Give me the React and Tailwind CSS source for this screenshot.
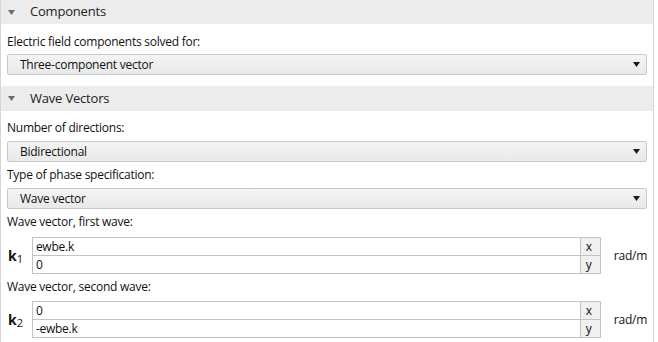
import React from 'react'

function Caret() {
  return (
    <svg width="7" height="5" viewBox="0 0 7 5" className="shrink-0">
      <path d="M0 0 H7 L3.5 5 Z" fill="#1a1a1a" />
    </svg>
  )
}

function Header({ title, tall }) {
  return (
    <div className={`flex items-center bg-[#ececec] ${tall ? 'h-[25px]' : 'h-[24px]'}`}>
      <svg width="7" height="5" viewBox="0 0 7 5" className="ml-[7px] mr-[15px]">
        <path d="M0 0 H7 L3.5 5 Z" fill="#6b6b6b" />
      </svg>
      <span className="text-[13px] text-[#222] tracking-[-0.2px]">{title}</span>
    </div>
  )
}

function Label({ children }) {
  return <div className="h-[18px] leading-[18px] text-[12px] text-[#111] tracking-[-0.25px]">{children}</div>
}

function Select({ value }) {
  return (
    <div className="flex items-center justify-between h-[21px] rounded-[2px] border border-[#c9c9c9] bg-gradient-to-b from-[#f4f4f4] to-[#e9e9e9] pl-[12px] pr-[6px]">
      <span className="text-[12px] text-[#111] tracking-[-0.25px]">{value}</span>
      <Caret />
    </div>
  )
}

function VectorField({ sub, values }) {
  return (
    <div className="flex items-center">
      <div className="w-[25px] pl-[1px] text-[#111]">
        <span className="font-bold text-[14px]">k</span>
        <span className="text-[11px] align-[-2px]">{sub}</span>
      </div>
      <div className="w-[572px] flex flex-col">
        {values.map((v, i) => (
          <div key={i} className={`flex h-[19px] ${i === 0 ? '' : '-mt-px'}`}>
            <div className="flex-1 flex items-center border border-[#c3c3c3] bg-white pl-[3px] text-[12px] text-[#111] tracking-[-0.25px]">{v}</div>
            <div className="w-[21px] -ml-px flex items-center pl-[5px] border border-[#c3c3c3] bg-[#f0f0f0] text-[12px] text-[#111]">{i === 0 ? 'x' : 'y'}</div>
          </div>
        ))}
      </div>
      <span className="ml-[13px] text-[12px] text-[#111] tracking-[-0.25px]">rad/m</span>
    </div>
  )
}

export default function App() {
  return (
    <div className="w-[658px] h-[342px] bg-white overflow-hidden" style={{ fontFamily: '"Open Sans", "Noto Sans", sans-serif' }}>
      <div className="w-[654px] h-[342px] border-l border-r border-[#d6d6d6]">
        <Header title="Components" />
        <div className="px-[6px] pt-[9px] pb-[11px]">
          <Label>Electric field components solved for:</Label>
          <div className="mt-[3px]"><Select value="Three-component vector" /></div>
        </div>
        <Header title="Wave Vectors" tall />
        <div className="px-[6px] pt-[8px]">
          <Label>Number of directions:</Label>
          <div className="mt-[4px]"><Select value="Bidirectional" /></div>
          <div className="mt-[4px]"><Label>Type of phase specification:</Label></div>
          <div className="mt-[4px]"><Select value="Wave vector" /></div>
          <div className="mt-[4px]"><Label>Wave vector, first wave:</Label></div>
          <div className="mt-[6px]"><VectorField sub="1" values={['ewbe.k', '0']} /></div>
          <div className="mt-[4px]"><Label>Wave vector, second wave:</Label></div>
          <div className="mt-[5px]"><VectorField sub="2" values={['0', '-ewbe.k']} /></div>
        </div>
      </div>
    </div>
  )
}
